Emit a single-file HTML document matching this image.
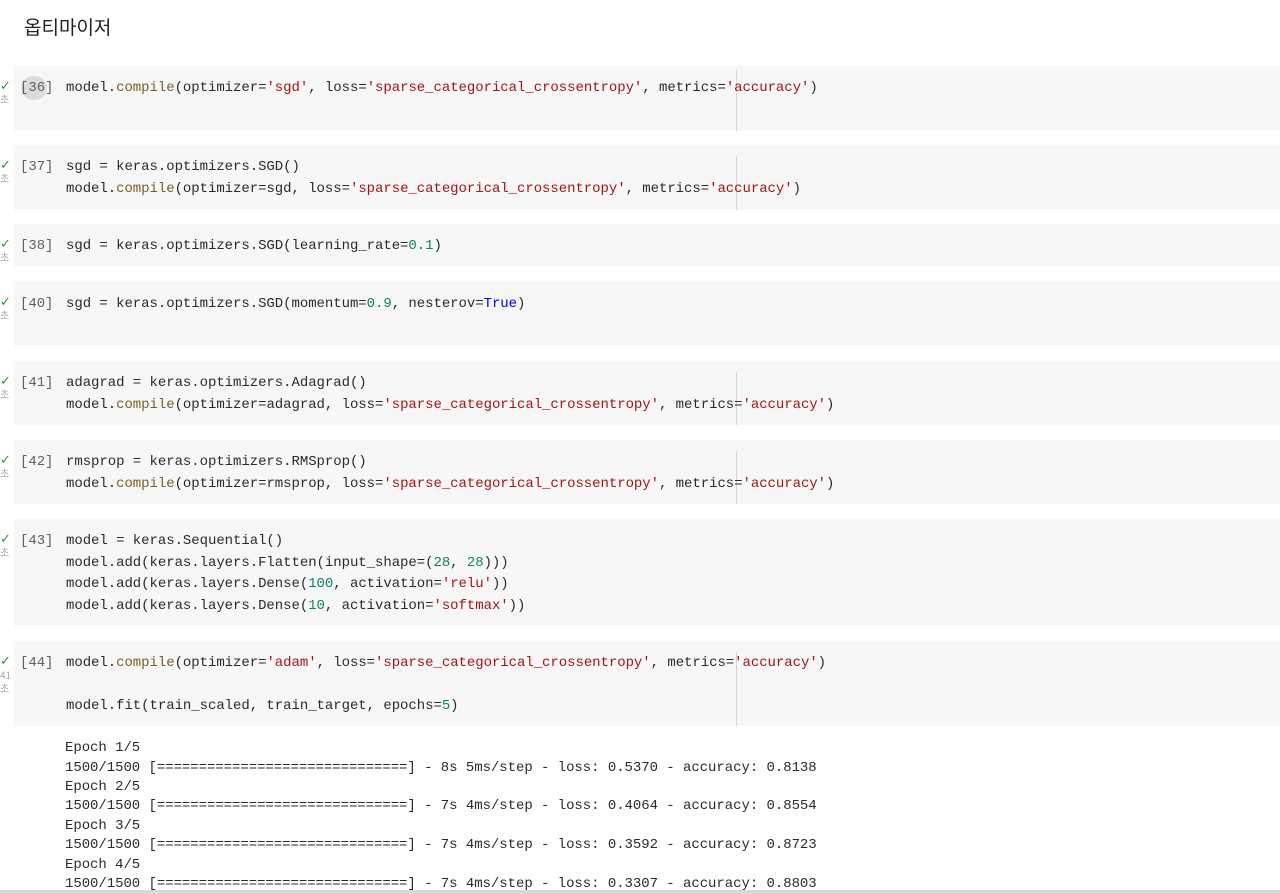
<!DOCTYPE html>
<html><head><meta charset="utf-8"><style>
body{margin:0;width:1280px;height:894px;background:#fff;position:relative;overflow:hidden;font-family:"Liberation Mono",monospace;font-size:14px;letter-spacing:-0.05px;color:#2a2a2a}
.t{position:absolute;left:24px;top:13px;font:19px "Liberation Sans","Noto Sans CJK KR",sans-serif;color:#212121;letter-spacing:0}
.c{position:absolute;left:14px;width:1266px;background:#f7f7f7}
.l{position:absolute;left:66px;white-space:pre;line-height:20px}
.n{position:absolute;left:20px;white-space:pre;line-height:20px;color:#616161}
.ck{position:absolute;left:0px;color:#1a9e3a;font:13px "Liberation Sans",sans-serif;line-height:14px}
.cho{position:absolute;left:0px;color:#aaa;font:10px "Noto Sans CJK KR",sans-serif;line-height:11px}
.v{position:absolute;left:736px;width:1px;background:#d6d6d6}
.f{color:#795e26}.s{color:#a31515}.d{color:#098658}.b{color:#0000ff}
.o{position:absolute;left:65px;white-space:pre;line-height:20px;color:#2a2a2a}
.hl{position:absolute;left:21px;top:76px;width:26px;height:24px;border-radius:12px;background:#dcdcdc}
</style></head><body>
<div class="t">옵티마이저</div>

<div class="c" style="top:66px;height:65px"></div>
<div class="c" style="top:145px;height:65px"></div>
<div class="c" style="top:224px;height:43px"></div>
<div class="c" style="top:281px;height:65px"></div>
<div class="c" style="top:361px;height:64px"></div>
<div class="c" style="top:440px;height:64px"></div>
<div class="c" style="top:519px;height:107px"></div>
<div class="c" style="top:641px;height:85px"></div>

<div class="v" style="top:70px;height:61px"></div>
<div class="v" style="top:156px;height:54px"></div>
<div class="v" style="top:372px;height:53px"></div>
<div class="v" style="top:451px;height:53px"></div>
<div class="v" style="top:652px;height:74px"></div>

<div class="hl"></div>

<div class="ck" style="top:79px">✓</div><div class="cho" style="top:93px">초</div>
<div class="ck" style="top:158px">✓</div><div class="cho" style="top:172px">초</div>
<div class="ck" style="top:237px">✓</div><div class="cho" style="top:251px">초</div>
<div class="ck" style="top:295px">✓</div><div class="cho" style="top:309px">초</div>
<div class="ck" style="top:374px">✓</div><div class="cho" style="top:388px">초</div>
<div class="ck" style="top:453px">✓</div><div class="cho" style="top:467px">초</div>
<div class="ck" style="top:532px">✓</div><div class="cho" style="top:546px">초</div>
<div class="ck" style="top:654px">✓</div><div class="cho" style="top:669px">41</div><div class="cho" style="top:682px">초</div>

<div class="n" style="top:78px">[36]</div>
<div class="l" style="top:78px">model.<span class="f">compile</span>(optimizer=<span class="s">'sgd'</span>, loss=<span class="s">'sparse_categorical_crossentropy'</span>, metrics=<span class="s">'accuracy'</span>)</div>

<div class="n" style="top:157px">[37]</div>
<div class="l" style="top:157px">sgd = keras.optimizers.SGD()</div>
<div class="l" style="top:179px">model.<span class="f">compile</span>(optimizer=sgd, loss=<span class="s">'sparse_categorical_crossentropy'</span>, metrics=<span class="s">'accuracy'</span>)</div>

<div class="n" style="top:236px">[38]</div>
<div class="l" style="top:236px">sgd = keras.optimizers.SGD(learning_rate=<span class="d">0.1</span>)</div>

<div class="n" style="top:294px">[40]</div>
<div class="l" style="top:294px">sgd = keras.optimizers.SGD(momentum=<span class="d">0.9</span>, nesterov=<span class="b">True</span>)</div>

<div class="n" style="top:373px">[41]</div>
<div class="l" style="top:373px">adagrad = keras.optimizers.Adagrad()</div>
<div class="l" style="top:395px">model.<span class="f">compile</span>(optimizer=adagrad, loss=<span class="s">'sparse_categorical_crossentropy'</span>, metrics=<span class="s">'accuracy'</span>)</div>

<div class="n" style="top:452px">[42]</div>
<div class="l" style="top:452px">rmsprop = keras.optimizers.RMSprop()</div>
<div class="l" style="top:474px">model.<span class="f">compile</span>(optimizer=rmsprop, loss=<span class="s">'sparse_categorical_crossentropy'</span>, metrics=<span class="s">'accuracy'</span>)</div>

<div class="n" style="top:531px">[43]</div>
<div class="l" style="top:531px">model = keras.Sequential()</div>
<div class="l" style="top:553px">model.add(keras.layers.Flatten(input_shape=(<span class="d">28</span>, <span class="d">28</span>)))</div>
<div class="l" style="top:574px">model.add(keras.layers.Dense(<span class="d">100</span>, activation=<span class="s">'relu'</span>))</div>
<div class="l" style="top:596px">model.add(keras.layers.Dense(<span class="d">10</span>, activation=<span class="s">'softmax'</span>))</div>

<div class="n" style="top:653px">[44]</div>
<div class="l" style="top:653px">model.<span class="f">compile</span>(optimizer=<span class="s">'adam'</span>, loss=<span class="s">'sparse_categorical_crossentropy'</span>, metrics=<span class="s">'accuracy'</span>)</div>
<div class="l" style="top:696px">model.fit(train_scaled, train_target, epochs=<span class="d">5</span>)</div>

<div class="o" style="top:738px">Epoch 1/5</div>
<div class="o" style="top:758px">1500/1500 [==============================] - 8s 5ms/step - loss: 0.5370 - accuracy: 0.8138</div>
<div class="o" style="top:777px">Epoch 2/5</div>
<div class="o" style="top:796px">1500/1500 [==============================] - 7s 4ms/step - loss: 0.4064 - accuracy: 0.8554</div>
<div class="o" style="top:816px">Epoch 3/5</div>
<div class="o" style="top:835px">1500/1500 [==============================] - 7s 4ms/step - loss: 0.3592 - accuracy: 0.8723</div>
<div class="o" style="top:855px">Epoch 4/5</div>
<div class="o" style="top:874px">1500/1500 [==============================] - 7s 4ms/step - loss: 0.3307 - accuracy: 0.8803</div>
<div style="position:absolute;left:0;top:890px;width:1280px;height:4px;background:#d8d8d8"></div>
</body></html>
